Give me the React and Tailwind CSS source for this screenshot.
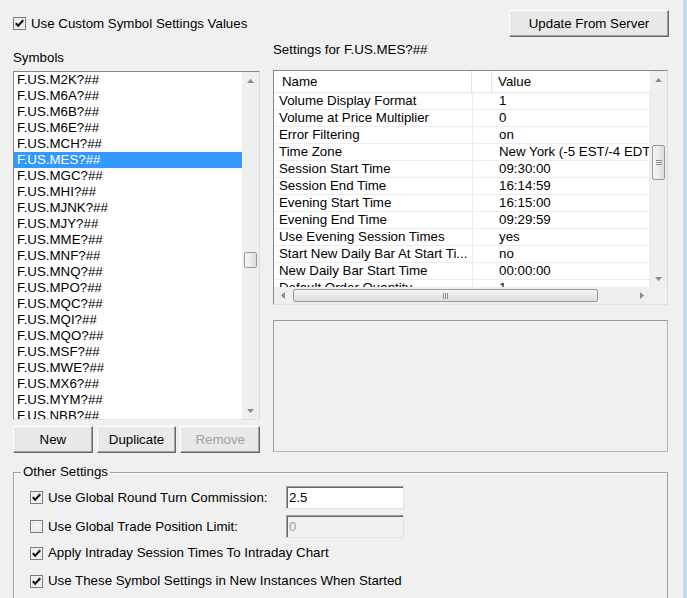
// symbol settings dialog
import React from "react";

const symbols = [
  "F.US.M2K?##",
  "F.US.M6A?##",
  "F.US.M6B?##",
  "F.US.M6E?##",
  "F.US.MCH?##",
  "F.US.MES?##",
  "F.US.MGC?##",
  "F.US.MHI?##",
  "F.US.MJNK?##",
  "F.US.MJY?##",
  "F.US.MME?##",
  "F.US.MNF?##",
  "F.US.MNQ?##",
  "F.US.MPO?##",
  "F.US.MQC?##",
  "F.US.MQI?##",
  "F.US.MQO?##",
  "F.US.MSF?##",
  "F.US.MWE?##",
  "F.US.MX6?##",
  "F.US.MYM?##",
  "F.US.NBB?##",
];

const settings = [
  ["Volume Display Format", "1"],
  ["Volume at Price Multiplier", "0"],
  ["Error Filtering", "on"],
  ["Time Zone", "New York (-5 EST/-4 EDT)"],
  ["Session Start Time", "09:30:00"],
  ["Session End Time", "16:14:59"],
  ["Evening Start Time", "16:15:00"],
  ["Evening End Time", "09:29:59"],
  ["Use Evening Session Times", "yes"],
  ["Start New Daily Bar At Start Ti...", "no"],
  ["New Daily Bar Start Time", "00:00:00"],
  ["Default Order Quantity", "1"],
];

function CheckBox({ checked }) {
  return (
    <svg width="13" height="13" viewBox="0 0 13 13" className="shrink-0">
      <rect x="0.5" y="0.5" width="12" height="12" fill="#fff" stroke="#7b7b7b" />
      <rect x="2" y="2" width="9" height="9" fill="#f2f2f2" stroke="#cfcfcf" strokeWidth="0.6" />
      {checked && (
        <path d="M2.8 6.2 L5.2 8.8 L10.2 3.2" fill="none" stroke="#111" strokeWidth="2.1" />
      )}
    </svg>
  );
}

// small gray triangle used on scrollbar buttons
function Arrow({ dir }) {
  const d = {
    up: "M0 4 L3.5 0 L7 4 Z",
    down: "M0 0 L3.5 4 L7 0 Z",
    left: "M4 0 L0 3.5 L4 7 Z",
    right: "M0 0 L4 3.5 L0 7 Z",
  }[dir];
  const vert = dir === "up" || dir === "down";
  return (
    <svg width={vert ? 7 : 4} height={vert ? 4 : 7} viewBox={vert ? "0 0 7 4" : "0 0 4 7"}>
      <path d={d} fill="#8a8a8a" />
    </svg>
  );
}

function VScroll({ before, thumb }) {
  return (
    <div className="w-[17px] h-full flex flex-col bg-[#efefef] shrink-0">
      <div className="h-[17px] flex items-center justify-center shrink-0">
        <Arrow dir="up" />
      </div>
      <div className="shrink-0" style={{ height: before }} />
      <div
        className="mx-[2px] shrink-0 rounded-[2px] border border-[#9a9a9a] bg-linear-to-r from-[#f7f7f7] to-[#dcdcdc] flex flex-col items-center justify-center gap-[1px]"
        style={{ height: thumb }}
      >
        {thumb > 20 && (
          <>
            <div className="w-[6px] h-[1px] bg-[#8c8c8c]" />
            <div className="w-[6px] h-[1px] bg-[#8c8c8c]" />
            <div className="w-[6px] h-[1px] bg-[#8c8c8c]" />
          </>
        )}
      </div>
      <div className="flex-1" />
      <div className="h-[17px] flex items-center justify-center shrink-0">
        <Arrow dir="down" />
      </div>
    </div>
  );
}

function Button({ children, disabled, className = "" }) {
  return (
    <div
      className={`h-[27px] flex items-center justify-center bg-[#e9e9e9] border border-t-white border-l-white border-r-[#696969] border-b-[#696969] shadow-[inset_-1px_-1px_0_#a0a0a0] ${
        disabled ? "text-[#a0a0a0]" : "text-black"
      } ${className}`}
    >
      {children}
    </div>
  );
}

function TextBox({ value, disabled }) {
  return (
    <div
      className={`w-[118px] h-[23px] flex items-center pl-[2px] border border-t-[#a0a0a0] border-l-[#a0a0a0] border-r-[#e3e3e3] border-b-[#e3e3e3] shadow-[inset_1px_1px_0_#696969] ${
        disabled ? "bg-[#f0f0f0] text-[#a0a0a0]" : "bg-white text-black"
      }`}
    >
      {value}
    </div>
  );
}

export default function App() {
  return (
    <div className="flex w-[687px] h-[598px] overflow-hidden bg-[#f0f0f0] text-[13.3px] leading-[16px] text-black font-[family-name:Liberation_Sans,Arial,sans-serif]">
      <div className="flex-1 flex flex-col pl-[13px] pr-[15px]">
        {/* top row */}
        <div className="flex items-center justify-between pt-[10px]">
          <div className="flex items-center gap-[5px]">
            <CheckBox checked />
            <span>Use Custom Symbol Settings Values</span>
          </div>
          <Button className="w-[160px] mr-[-1px]">Update From Server</Button>
        </div>

        <div className="flex gap-[13px]">
          {/* Symbols column */}
          <div className="w-[247px] flex flex-col">
            <div className="mt-[13px] h-[16px]">Symbols</div>
            <div className="mt-[5px] h-[349px] flex bg-white border border-t-[#828790] border-l-[#828790] border-r-[#dcdcdc] border-b-[#e3e3e3] overflow-hidden">
              <div className="flex-1 overflow-hidden">
                {symbols.map((s) => (
                  <div
                    key={s}
                    className={`h-[16px] pl-[3px] whitespace-nowrap ${
                      s === "F.US.MES?##" ? "bg-[#3399ff] text-white" : ""
                    }`}
                  >
                    {s}
                  </div>
                ))}
              </div>
              <VScroll before={163} thumb={16} />
            </div>
            <div className="mt-[6px] flex gap-[4px]">
              <Button className="w-[80px]">New</Button>
              <Button className="w-[80px]">Duplicate</Button>
              <Button className="w-[80px]" disabled>
                Remove
              </Button>
            </div>
          </div>

          {/* Settings column */}
          <div className="w-[395px] flex flex-col">
            <div className="mt-[5px] h-[16px]">Settings for F.US.MES?##</div>
            <div className="mt-[12px] h-[235px] flex flex-col bg-white border border-t-[#828790] border-l-[#828790] border-r-[#dcdcdc] border-b-[#e3e3e3]">
              <div className="h-[216px] flex">
                <div className="w-[376px] overflow-hidden">
                  <div className="h-[22px] flex border-b border-[#e5e5e5]">
                    <div className="w-[198px] pl-[8px] flex items-center border-r border-[#e3e3e3]">Name</div>
                    <div className="w-[20px] border-r border-[#e3e3e3]" />
                    <div className="flex-1 pl-[6px] flex items-center">Value</div>
                  </div>
                  {settings.map(([name, value]) => (
                    <div key={name} className="h-[17px] flex border-b border-[#ededed]">
                      <div className="w-[199px] pl-[5px] border-r border-[#ededed] whitespace-nowrap overflow-hidden">
                        {name}
                      </div>
                      <div className="flex-1 pl-[26px] border-r border-[#ededed] whitespace-nowrap overflow-hidden">
                        {value}
                      </div>
                    </div>
                  ))}
                </div>
                <VScroll before={57} thumb={35} />
              </div>
              {/* horizontal scrollbar */}
              <div className="h-[17px] flex bg-[#efefef]">
                <div className="w-[376px] flex items-center">
                  <div className="w-[17px] flex justify-center">
                    <Arrow dir="left" />
                  </div>
                  <div className="ml-[2px] w-[305px] h-[13px] rounded-[2px] border border-[#9a9a9a] bg-linear-to-b from-[#f7f7f7] to-[#dcdcdc] flex items-center justify-center gap-[1px]">
                    <div className="w-[1px] h-[6px] bg-[#8c8c8c]" />
                    <div className="w-[1px] h-[6px] bg-[#8c8c8c]" />
                    <div className="w-[1px] h-[6px] bg-[#8c8c8c]" />
                  </div>
                  <div className="flex-1" />
                  <div className="w-[17px] flex justify-center">
                    <Arrow dir="right" />
                  </div>
                </div>
                <div className="flex-1 bg-[#f0f0f0]" />
              </div>
            </div>
            <div className="mt-[15px] h-[132px] border border-t-[#9a9a9a] border-l-[#9a9a9a] border-r-[#b4b4b4] border-b-[#b4b4b4]" />
          </div>
        </div>

        {/* Other Settings group */}
        <fieldset className="mt-[11px] h-[170px] shrink-0 border border-[#a0a0a0] shadow-[inset_1px_1px_0_#fff]">
          <legend className="ml-[7px] px-[2px] bg-[#f0f0f0]">Other Settings</legend>
          <div className="pl-[16px]">
            <div className="mt-[6px] h-[23px] flex items-center">
              <CheckBox checked />
              <span className="ml-[5px] w-[238px]">Use Global Round Turn Commission:</span>
              <TextBox value="2.5" />
            </div>
            <div className="mt-[6px] h-[23px] flex items-center">
              <CheckBox />
              <span className="ml-[5px] w-[238px]">Use Global Trade Position Limit:</span>
              <TextBox value="0" disabled />
            </div>
            <div className="mt-[7px] h-[16px] flex items-center">
              <CheckBox checked />
              <span className="ml-[5px]">Apply Intraday Session Times To Intraday Chart</span>
            </div>
            <div className="mt-[12px] h-[16px] flex items-center">
              <CheckBox checked />
              <span className="ml-[5px]">Use These Symbol Settings in New Instances When Started</span>
            </div>
          </div>
        </fieldset>
      </div>
      <div className="w-[4px] bg-[#c6d8ee]" />
    </div>
  );
}
